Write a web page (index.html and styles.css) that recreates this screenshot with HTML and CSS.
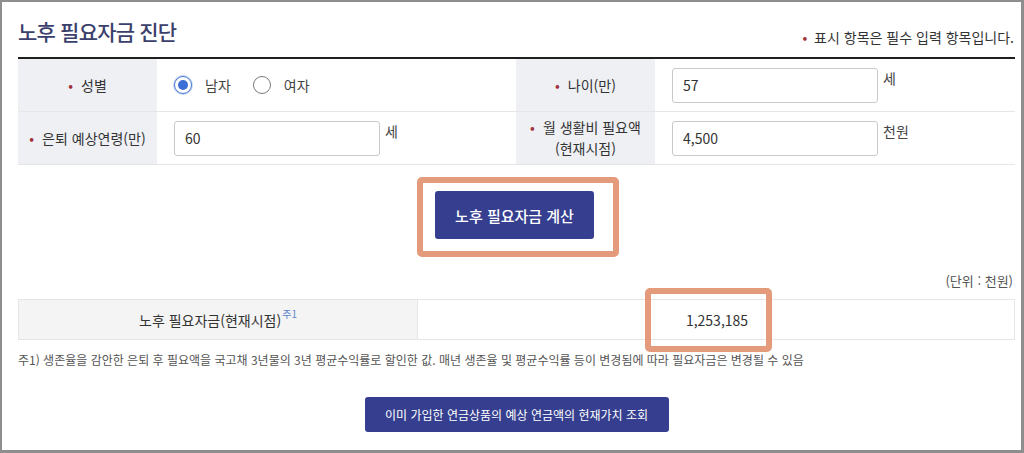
FILE: index.html
```html
<!DOCTYPE html>
<html lang="ko">
<head>
<meta charset="utf-8">
<title>노후 필요자금 진단</title>
<link rel="stylesheet" href="styles.css">
</head>
<body>
<div class="frame">
  <div class="header">
    <h1 class="title">노후 필요자금 진단</h1>
    <p class="req-note"><span class="dot">•</span> 표시 항목은 필수 입력 항목입니다.</p>
  </div>

  <div class="form-grid">
    <div class="lbl"><span class="dot">•</span>성별</div>
    <div class="cell">
      <label class="radio"><span class="radio-mark on"></span>남자</label>
      <label class="radio"><span class="radio-mark"></span>여자</label>
    </div>
    <div class="lbl"><span class="dot">•</span>나이(만)</div>
    <div class="cell">
      <div class="input">57</div><span class="unit">세</span>
    </div>

    <div class="lbl"><span class="dot">•</span>은퇴 예상연령(만)</div>
    <div class="cell">
      <div class="input">60</div><span class="unit">세</span>
    </div>
    <div class="lbl two-line"><span class="dot">•</span>월 생활비 필요액<br>(현재시점)</div>
    <div class="cell">
      <div class="input">4,500</div><span class="unit">천원</span>
    </div>
  </div>

  <div class="calc-row">
    <div class="highlight">
      <button class="btn-main">노후 필요자금 계산</button>
    </div>
  </div>

  <p class="unit-note">(단위 : 천원)</p>

  <div class="result">
    <div class="result-lbl">노후 필요자금(현재시점)<sup class="sup">주1</sup></div>
    <div class="result-val">
      <span>1,253,185</span>
      <div class="highlight-box"></div>
    </div>
  </div>

  <p class="footnote">주1) 생존율을 감안한 은퇴 후 필요액을 국고채 3년물의 3년 평균수익률로 할인한 값. 매년 생존율 및 평균수익률 등이 변경됨에 따라 필요자금은 변경될 수 있음</p>

  <div class="bottom-row">
    <button class="btn-sub">이미 가입한 연금상품의 예상 연금액의 현재가치 조회</button>
  </div>
</div>
</body>
</html>
```

FILE: styles.css
```css
* { box-sizing: border-box; }
html, body { margin: 0; padding: 0; background: #fff; }
body {
  font-family: "Noto Sans CJK KR", "Noto Sans", sans-serif;
  color: #333;
}
.frame {
  width: 1024px;
  height: 453px;
  border-style: solid;
  border-color: #8e8e8e;
  border-width: 2px 3px 3px 2px;
  padding: 0 6px 0 16px;
  overflow: hidden;
}
.header {
  height: 55px;
  display: flex;
  justify-content: space-between;
  align-items: flex-end;
}
.title {
  margin: 0 0 11px 0;
  font-size: 21px;
  line-height: 30px;
  font-weight: 500;
  letter-spacing: -0.8px;
  color: #3b3f6c;
}
.req-note {
  margin: 0 1px 10px 0;
  font-size: 14px;
  line-height: 20px;
  color: #333;
}
.req-note .dot { margin-right: 3px; }
.dot { color: #a3303a; margin-right: 8px; }

.form-grid {
  display: grid;
  grid-template-columns: 139px 359px 139px 360px;
  border-top: 2px solid #1f1f1f;
}
.lbl, .cell {
  height: 53px;
  border-bottom: 1px solid #e6e6e6;
  display: flex;
  align-items: center;
}
.lbl {
  background: #eef0f3;
  justify-content: center;
  text-align: center;
  font-size: 14px;
  line-height: 21px;
  color: #333;
  padding: 0 4px;
}
.two-line { display: block; padding-top: 5px; }
.cell { padding-left: 17px; }
.input {
  width: 206px;
  height: 35px;
  border: 1px solid #c9c9c9;
  border-radius: 3px;
  padding-left: 10px;
  font-size: 14px;
  line-height: 33px;
  color: #333;
}
.unit {
  margin-left: 5px;
  font-size: 14px;
  color: #444;
  align-self: flex-start;
  margin-top: 9px;
}
.radio {
  display: flex;
  align-items: center;
  font-size: 14px;
  color: #444;
  margin-right: 22px;
}
.radio-mark {
  width: 18px;
  height: 18px;
  border-radius: 50%;
  border: 1px solid #7a7a7a;
  background: #fff;
  margin-right: 13px;
  position: relative;
}
.radio-mark.on {
  border: 1px solid #4a78d6;
  box-shadow: 0 0 0 1px #c8d7f3;
}
.radio-mark.on::after {
  content: "";
  position: absolute;
  left: 3px; top: 3px;
  width: 10px; height: 10px;
  border-radius: 50%;
  background: #3d6fd6;
}

.calc-row {
  display: flex;
  justify-content: center;
  margin-top: 12px;
}
.highlight {
  border: 6px solid #e39b7b;
  border-radius: 5px;
  padding: 8px 19px 12px 12px;
  margin-left: 3px;
}
.btn-main {
  display: block;
  width: 159px;
  height: 48px;
  border: 0;
  border-radius: 3px;
  background: #363f8f;
  color: #fff;
  font-family: inherit;
  font-size: 15px;
  font-weight: 500;
}

.unit-note {
  margin: 14px 2px 0 0;
  text-align: right;
  font-size: 13px;
  line-height: 20px;
  color: #555;
}
.result {
  margin-top: 8px;
  display: grid;
  grid-template-columns: 399px 598px;
  border: 1px solid #e6e6e6;
  height: 41px;
}
.result-lbl {
  background: #f4f4f4;
  border-right: 1px solid #e6e6e6;
  display: flex;
  align-items: center;
  justify-content: center;
  font-size: 14px;
  color: #333;
}
.sup {
  font-size: 10px;
  color: #5b86d0;
  align-self: flex-start;
  margin-top: 6px;
  margin-left: 1px;
}
.result-val {
  position: relative;
  display: flex;
  align-items: center;
  justify-content: center;
  font-size: 14px;
  color: #333;
}
.highlight-box {
  position: absolute;
  left: 227px;
  top: -12px;
  width: 127px;
  height: 64px;
  border: 6px solid #e39b7b;
  border-radius: 5px;
}
.footnote {
  margin: 10px 0 0 0;
  font-size: 12px;
  line-height: 20px;
  color: #555;
  letter-spacing: 0;
}
.bottom-row {
  display: flex;
  justify-content: center;
  margin-top: 27px;
}
.btn-sub {
  width: 304px;
  height: 35px;
  border: 0;
  border-radius: 3px;
  background: #363f8f;
  color: #fff;
  font-family: inherit;
  font-size: 12px;
  font-weight: 400;
}
```
